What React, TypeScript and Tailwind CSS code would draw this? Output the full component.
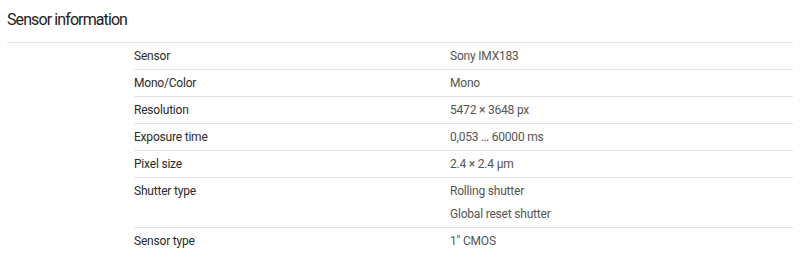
const rows: { label: string; values: string[] }[] = [
  { label: 'Sensor', values: ['Sony IMX183'] },
  { label: 'Mono/Color', values: ['Mono'] },
  { label: 'Resolution', values: ['5472 × 3648 px'] },
  { label: 'Exposure time', values: ['0,053 … 60000 ms'] },
  { label: 'Pixel size', values: ['2.4 × 2.4 µm'] },
  { label: 'Shutter type', values: ['Rolling shutter', 'Global reset shutter'] },
  { label: 'Sensor type', values: ['1" CMOS'] },
];

export default function App() {
  return (
    <div className="w-[800px] h-[262px] bg-white px-[7px] font-['Roboto',sans-serif] overflow-hidden">
      {/* Section heading */}
      <div className="h-[43px] border-b border-[#e3e3e3] pt-[8px]">
        <h2 className="text-[16px] leading-[24px] text-[#222] tracking-[-0.9px]">Sensor information</h2>
      </div>

      {/* Spec table */}
      <div className="ml-[127px]">
        {rows.map((row, i) => (
          <div
            key={row.label}
            className={`flex py-px text-[12px] leading-[24px] tracking-[-0.2px] ${
              i < rows.length - 1 ? 'border-b border-[#e3e3e3]' : ''
            }`}
          >
            <div className="w-[316px] text-[#2a2a2a]">{row.label}</div>
            <div className="flex flex-col text-[#555]">
              {row.values.map((v, j) => (
                <span key={v} className={j > 0 ? 'leading-[23px]' : ''}>
                  {v}
                </span>
              ))}
            </div>
          </div>
        ))}
      </div>
    </div>
  );
}
